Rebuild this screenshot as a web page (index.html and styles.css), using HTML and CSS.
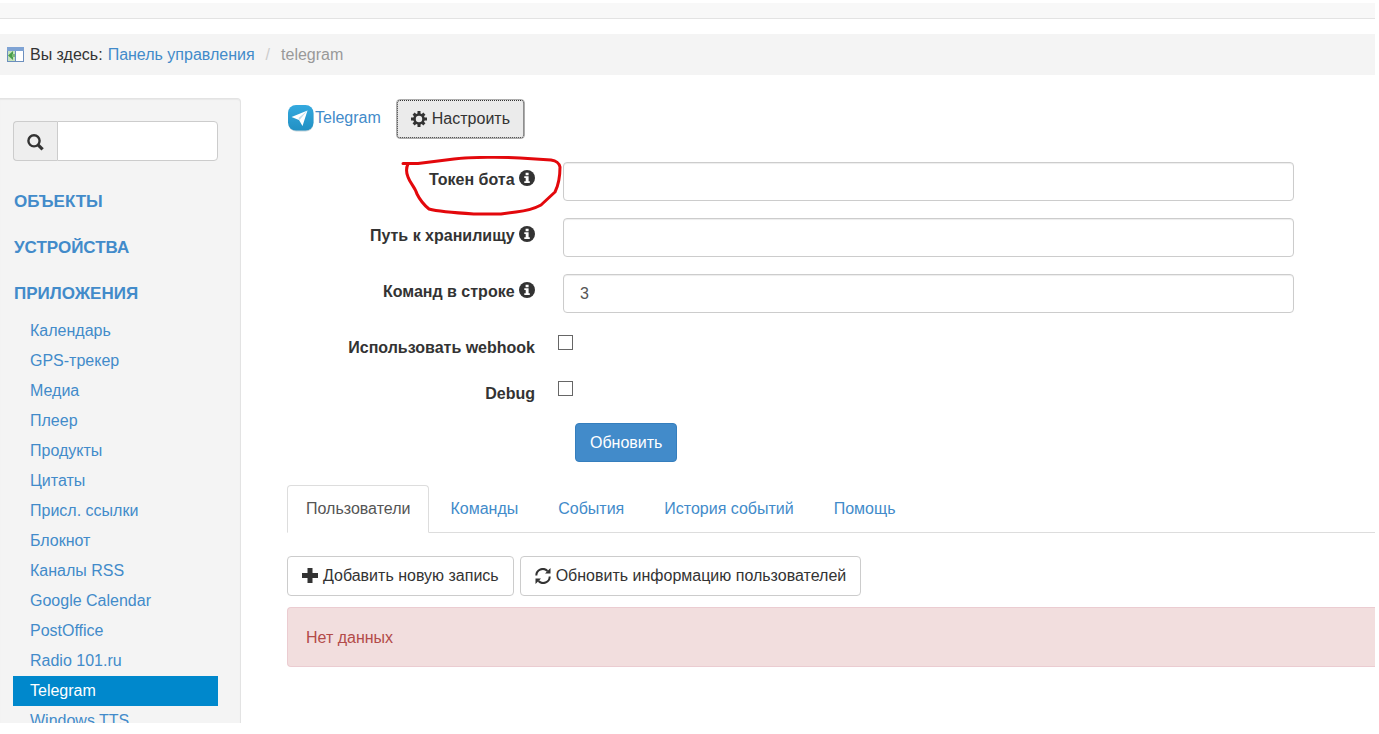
FILE: index.html
```html
<!DOCTYPE html>
<html lang="ru">
<head>
<meta charset="utf-8">
<title>Telegram</title>
<link rel="stylesheet" href="styles.css">
</head>
<body>
<svg class="sprite" aria-hidden="true">
  <symbol id="info" viewBox="0 0 16 16"><circle cx="8" cy="8" r="8" fill="#333"/><path d="M6.6 2.8h3v2.4h-3zM5.3 6.3h4.3v5h1.2v1.8H5.3v-1.8h1.4V8.1H5.3z" fill="#fff"/></symbol>
</svg>
<div class="frame">
  <div class="topbar"></div>
  <nav class="breadcrumb" aria-label="Вы здесь">
    <svg class="crumb-icon" width="17" height="15" viewBox="0 0 17 15"><rect x=".5" y=".5" width="16" height="14" fill="#fff" stroke="#6c8fbe"/><path d="M0 0h17v4H0z" fill="#7fa3d4"/><path d="M1 4h7v10H1z" fill="#c5e2bd"/><path d="M8 4h1v10H8z" fill="#6c8fbe"/><path d="M1 8.500 6 4v9z" fill="#4a9e4c"/><path d="M5 7h3v3H5z" fill="#7dbb76"/></svg>
    <span>Вы здесь:</span>
    <a href="#">Панель управления</a>
    <span class="slash">/</span>
    <span class="current">telegram</span>
  </nav>
  <div class="columns">
    <aside class="sidebar">
      <div class="search">
        <button class="search-button" aria-label="Поиск"><svg width="17" height="17" viewBox="0 0 17 17" fill="none" stroke="#333"><circle cx="7" cy="6.800" r="5.600" stroke-width="2.400"/><path d="m10.800 10.600 4.800 4.800" stroke-width="3.200"/></svg></button>
        <input class="search-input" type="text" aria-label="Строка поиска">
      </div>
      <a class="group" href="#">ОБЪЕКТЫ</a>
      <a class="group" href="#">УСТРОЙСТВА</a>
      <a class="group" href="#">ПРИЛОЖЕНИЯ</a>
      <ul class="apps">
        <li><a href="#">Календарь</a></li>
        <li><a href="#">GPS-трекер</a></li>
        <li><a href="#">Медиа</a></li>
        <li><a href="#">Плеер</a></li>
        <li><a href="#">Продукты</a></li>
        <li><a href="#">Цитаты</a></li>
        <li><a href="#">Присл. ссылки</a></li>
        <li><a href="#">Блокнот</a></li>
        <li><a href="#">Каналы RSS</a></li>
        <li><a href="#">Google Calendar</a></li>
        <li><a href="#">PostOffice</a></li>
        <li><a href="#">Radio 101.ru</a></li>
        <li><a class="active" href="#">Telegram</a></li>
        <li><a href="#">Windows TTS</a></li>
      </ul>
    </aside>
    <main class="main">
      <div class="heading">
        <a class="module" href="#"><svg width="28" height="28" viewBox="0 0 28 28"><defs><linearGradient id="sky" x2="0" y2="1"><stop stop-color="#34a9df"/><stop offset="1" stop-color="#2290c3"/></linearGradient></defs><rect x="1.500" y="2" width="25" height="25.500" rx="8" fill="#c3d3da"/><rect x="1" y="1" width="25.500" height="25.500" rx="8" fill="url(#sky)"/><path d="M4.500 13 20.500 6.500 15.500 22l-3.500-6z" fill="#fff"/><path d="M20.500 6.500 12.500 16l-1-2z" fill="#bcdcec"/></svg>Telegram</a>
        <button class="btn focused"><svg width="16" height="16" viewBox="0 0 16 16"><g stroke="#333" stroke-width="3"><path d="M8 0v16M0 8h16M2.600 2.600l10.800 10.800M2.600 13.400 13.400 2.600"/></g><circle cx="8" cy="8" r="4.500" fill="#ebebeb" stroke="#333" stroke-width="2.600"/></svg>Настроить</button>
      </div>
      <form class="form">
        <div class="row marked">
          <label for="token">Токен бота <svg width="16" height="16"><use href="#info"/></svg></label>
          <input class="field" id="token" type="text">
          <svg class="mark" width="162" height="62" viewBox="0 0 162 62" fill="none" stroke="#e3080c" stroke-width="3" stroke-linecap="round" stroke-linejoin="round"><path d="M2 7.500h15L53 3c17-2 50-2 66-1l31 2c6 1 8 3 9 7 0 9-1 17-5 25l-14 13c-9 5-16 6-25 7l-15 2H74c-17-1-35-2-46-5-5-4-9-9-12-15-2-7-7-11-9-17-2-5-2-9 0-13"/></svg>
        </div>
        <div class="row">
          <label for="path">Путь к хранилищу <svg width="16" height="16"><use href="#info"/></svg></label>
          <input class="field" id="path" type="text">
        </div>
        <div class="row">
          <label for="count">Команд в строке <svg width="16" height="16"><use href="#info"/></svg></label>
          <input class="field" id="count" type="text" value="3">
        </div>
        <div class="row check-row">
          <label for="webhook">Использовать webhook</label>
          <input class="check" id="webhook" type="checkbox">
        </div>
        <div class="row check-row">
          <label for="debug">Debug</label>
          <input class="check" id="debug" type="checkbox">
        </div>
        <button class="btn primary" type="button">Обновить</button>
      </form>
      <nav class="tabs">
        <a class="tab selected" href="#">Пользователи</a>
        <a class="tab" href="#">Команды</a>
        <a class="tab" href="#">События</a>
        <a class="tab" href="#">История событий</a>
        <a class="tab" href="#">Помощь</a>
      </nav>
      <div class="actions">
        <button class="btn"><svg width="16" height="16" viewBox="0 0 16 16"><path d="M8 0v15M0 7.500h16" stroke="#333" stroke-width="5"/></svg>Добавить новую запись</button>
        <button class="btn"><svg width="16" height="16" viewBox="0 0 16 16"><path d="M1.300 7.500A6.500 6.500 0 0 1 12.500 3M14.700 8.500A6.500 6.500 0 0 1 3.500 13" fill="none" stroke="#333" stroke-width="2"/><path d="M15.500 0v5.500H10zM.5 16v-5.500H6z" fill="#333"/></svg>Обновить информацию пользователей</button>
      </div>
      <div class="alert">Нет данных</div>
    </main>
  </div>
</div>
</body>
</html>
```
FILE: styles.css
```css
* { box-sizing: border-box; }
body {
  margin: 0;
  padding: 3px 4px 11px 0;
  height: 100vh;
  background: #fff;
  color: #333;
  font: 16px/22px "Liberation Sans", Arial, sans-serif;
}
a { color: #428bca; text-decoration: none; }
input, button { font: inherit; color: inherit; }
.sprite { display: none; }
.frame { height: 100%; overflow: hidden; }
.topbar { height: 16px; background: #f8f8f8; border-bottom: 1px solid #e3e3e3; }
.breadcrumb {
  display: flex;
  align-items: center;
  gap: 5px;
  height: 41px;
  margin: 15px 0 23px;
  padding-left: 7px;
  background: #f4f4f4;
}
.crumb-icon { margin-right: 1px; }
.slash { color: #ccc; padding: 0 6px; }
.current { color: #999; }
.columns { display: flex; align-items: stretch; }
.sidebar {
  flex: none;
  width: 241px;
  padding: 22px 22px 20px 13px;
  background: #f4f4f4;
  border: 1px solid #e3e3e3;
  border-left: 0;
  border-radius: 0 4px 0 0;
  box-shadow: inset 0 1px 1px rgba(0, 0, 0, .05);
}
.search { display: flex; height: 40px; margin-bottom: 18px; }
.search-button {
  flex: none;
  display: grid;
  place-items: center;
  width: 44px;
  padding: 2px 0 0;
  background: #eee;
  border: 1px solid #ccc;
  border-right: 0;
  border-radius: 4px 0 0 4px;
}
.search-input {
  flex: 1;
  min-width: 0;
  border: 1px solid #ccc;
  border-radius: 0 4px 4px 0;
  background: #fff;
}
.group {
  display: block;
  height: 46px;
  padding: 12px 1px;
  font-size: 17px;
  font-weight: bold;
}
.apps { list-style: none; margin: -1px 0 0; padding: 0; }
.apps a { display: block; height: 30px; padding: 4px 17px; }
.apps .active { background: #08c; color: #fff; }
.main { flex: 1; min-width: 0; padding: 1px 0 0 46px; }
.heading { display: flex; gap: 15px; }
.module { display: flex; align-items: center; height: 38px; }
.btn {
  display: inline-flex;
  align-items: center;
  gap: 5px;
  height: 40px;
  padding: 0 14px;
  background: #fff;
  border: 1px solid #ccc;
  border-radius: 4px;
  white-space: nowrap;
}
.focused {
  background: #ebebeb;
  border-color: #adadad;
  outline: 1px dotted #333;
  outline-offset: -2px;
}
.form { padding: 23px 81px 0 0; }
.row {
  display: grid;
  grid-template-columns: 248px 1fr;
  column-gap: 28px;
  height: 56px;
  align-items: start;
}
.row label { padding-top: 7px; text-align: right; font-weight: bold; }
.row label svg { vertical-align: -1px; }
.marked { position: relative; }
.mark { position: absolute; left: 114px; top: -6px; pointer-events: none; }
.field {
  width: 100%;
  height: 39px;
  padding: 0 16px;
  color: #555;
  background: #fff;
  border: 1px solid #ccc;
  border-radius: 4px;
  box-shadow: inset 0 1px 1px rgba(0, 0, 0, .075);
}
.check-row { height: 46px; column-gap: 23px; }
.check {
  appearance: none;
  width: 15px;
  height: 15px;
  margin: 5px 0 0;
  border: 1px solid #666;
  background: #fff;
}
.check:checked { background: #428bca; }
.primary {
  height: 39px;
  margin: 1px 0 0 288px;
  background: #428bca;
  border-color: #357ebd;
  color: #fff;
}
.tabs { display: flex; gap: 2px; margin-top: 23px; border-bottom: 1px solid #ddd; }
.tab { height: 47px; padding: 12px 18px; border: 1px solid transparent; }
.selected {
  margin-bottom: -1px;
  height: 48px;
  color: #555;
  background: #fff;
  border-color: #ddd #ddd #fff;
  border-radius: 4px 4px 0 0;
}
.actions { display: flex; gap: 6px; margin: 23px 0 11px; }
.alert {
  height: 60px;
  padding: 19px 18px;
  color: #b34b49;
  background: #f2dede;
  border: 1px solid #ebccd1;
  border-right: 0;
  border-radius: 4px 0 0 4px;
}
```
